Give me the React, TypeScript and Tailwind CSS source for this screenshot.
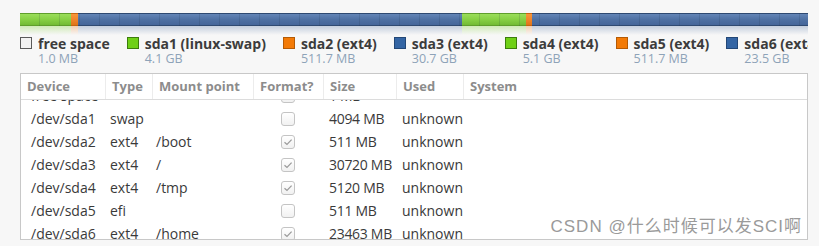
import React from "react";

interface Segment {
  width: number;
  kind: "green" | "orange" | "blue";
}

interface LegendItem {
  name: string;
  size: string;
  swatch: string;
}

interface Row {
  device: string;
  type: string;
  mount: string;
  format: boolean;
  size: string;
  used: string;
}

const segments: Segment[] = [
  { width: 51, kind: "green" },
  { width: 7, kind: "orange" },
  { width: 384, kind: "blue" },
  { width: 64, kind: "green" },
  { width: 6, kind: "orange" },
  { width: 276, kind: "blue" },
];

const barClass = {
  green: "bg-linear-to-b from-[#9ade5a] via-[#87d044] to-[#72bb35] border-y border-[#5f9e2c]",
  orange: "bg-linear-to-b from-[#f7963a] via-[#f0852a] to-[#df7418] border-y border-[#c66410]",
  blue: "bg-linear-to-b from-[#6385b6] via-[#4f71a3] to-[#45669a] border-y border-[#2f4a72]",
};

const glowClass = {
  green: "bg-linear-to-b from-[#87d044]/35 to-transparent",
  orange: "bg-linear-to-b from-[#f0852a]/35 to-transparent",
  blue: "bg-linear-to-b from-[#4f71a3]/30 to-transparent",
};

const legend: LegendItem[] = [
  { name: "free space", size: "1.0 MB", swatch: "bg-[#f2f2f2] border-[#5a5a5a]" },
  { name: "sda1 (linux-swap)", size: "4.1 GB", swatch: "bg-[#6fd016] border-[#3c7d0c]" },
  { name: "sda2 (ext4)", size: "511.7 MB", swatch: "bg-[#f37a06] border-[#b55a04]" },
  { name: "sda3 (ext4)", size: "30.7 GB", swatch: "bg-[#3465a4] border-[#234777]" },
  { name: "sda4 (ext4)", size: "5.1 GB", swatch: "bg-[#6fd016] border-[#3c7d0c]" },
  { name: "sda5 (ext4)", size: "511.7 MB", swatch: "bg-[#f37a06] border-[#b55a04]" },
  { name: "sda6 (ext4)", size: "23.5 GB", swatch: "bg-[#3465a4] border-[#234777]" },
];

const rows: Row[] = [
  { device: "free space", type: "", mount: "", format: false, size: "1 MB", used: "" },
  { device: "/dev/sda1", type: "swap", mount: "", format: false, size: "4094 MB", used: "unknown" },
  { device: "/dev/sda2", type: "ext4", mount: "/boot", format: true, size: "511 MB", used: "unknown" },
  { device: "/dev/sda3", type: "ext4", mount: "/", format: true, size: "30720 MB", used: "unknown" },
  { device: "/dev/sda4", type: "ext4", mount: "/tmp", format: true, size: "5120 MB", used: "unknown" },
  { device: "/dev/sda5", type: "efi", mount: "", format: false, size: "511 MB", used: "unknown" },
  { device: "/dev/sda6", type: "ext4", mount: "/home", format: true, size: "23463 MB", used: "unknown" },
];

const cols = "grid grid-cols-[84px_47px_101px_70px_73px_67px_1fr]";

function Checkbox({ checked }: { checked: boolean }) {
  return (
    <div className="w-[14px] h-[14px] rounded-[3px] border border-[#c4c4c4] bg-linear-to-b from-white to-[#f1f1f1] flex items-center justify-center">
      {checked && (
        <svg width="10" height="10" viewBox="0 0 10 10" fill="none">
          <path d="M1.5 5.2 L4 7.5 L8.6 2.6" stroke="#9a9a9a" strokeWidth="1.2" />
        </svg>
      )}
    </div>
  );
}

export default function App() {
  return (
    <div className="w-[819px] h-[246px] bg-[#f7f7f7] overflow-hidden font-['Open_Sans','Noto_Sans',sans-serif] pt-[13px]">
      <div className="ml-[20px] w-[788px]">
        <div className="relative flex h-[13px]">
          {segments.map((s, i) => (
            <div key={i} className={barClass[s.kind]} style={{ width: s.width }} />
          ))}
          <div className="absolute inset-0 bg-[repeating-linear-gradient(90deg,transparent_0_19px,rgba(20,40,60,0.14)_19px_20px)]" />
        </div>
        <div className="flex h-[9px]">
          {segments.map((s, i) => (
            <div key={i} className={glowClass[s.kind]} style={{ width: s.width }} />
          ))}
        </div>

        <div className="flex gap-[17px] overflow-hidden whitespace-nowrap">
          {legend.map((item) => (
            <div key={item.name} className="flex gap-[6px] shrink-0">
              <div className={`w-[12px] h-[12px] border mt-[2px] ${item.swatch}`} />
              <div className="flex flex-col">
                <span className="text-[14px] leading-[17px] font-bold text-[#3c3c3c]">{item.name}</span>
                <span className="text-[12.5px] leading-[14px] text-[#8ea3b8]">{item.size}</span>
              </div>
            </div>
          ))}
        </div>

        <div className="relative mt-[7px] h-[167px] bg-white border border-[#c8c8c8] overflow-hidden">
          <div className={`${cols} h-[26px] border-b border-[#dcdcdc] text-[13px] font-bold text-[#8c8c8c] items-center`}>
            <div className="pl-[6px] h-full flex items-center">Device</div>
            <div className="pl-[6px] h-full flex items-center border-l border-[#ececec]">Type</div>
            <div className="pl-[6px] h-full flex items-center border-l border-[#ececec]">Mount point</div>
            <div className="pl-[6px] h-full flex items-center border-l border-[#ececec]">Format?</div>
            <div className="pl-[6px] h-full flex items-center border-l border-[#ececec]">Size</div>
            <div className="pl-[6px] h-full flex items-center border-l border-[#ececec]">Used</div>
            <div className="pl-[6px] h-full flex items-center border-l border-[#ececec]">System</div>
          </div>
          <div className="h-[139px] overflow-hidden">
            <div className="-mt-[16px] text-[14px] text-[#3a3a3a]">
              {rows.map((r) => (
                <div key={r.device} className={`${cols} h-[23px] items-center whitespace-nowrap`}>
                  <div className="pl-[10px]">{r.device}</div>
                  <div className="pl-[5px]">{r.type}</div>
                  <div className="pl-[4px]">{r.mount}</div>
                  <div className="flex justify-center">
                    <Checkbox checked={r.format} />
                  </div>
                  <div className="pl-[6px] tracking-[-0.3px]">{r.size}</div>
                  <div className="pl-[6px]">{r.used}</div>
                  <div />
                </div>
              ))}
            </div>
          </div>
          <div className="absolute right-[5px] bottom-[2px] text-[17px] leading-[20px] tracking-[1px] text-[#9a9a9a] font-['Liberation_Sans','Noto_Sans_CJK_SC',sans-serif] whitespace-nowrap">
            CSDN @<span className="text-[17px]">什么时候可以发</span>SCI<span className="text-[17px]">啊</span>
          </div>
        </div>
      </div>
    </div>
  );
}
